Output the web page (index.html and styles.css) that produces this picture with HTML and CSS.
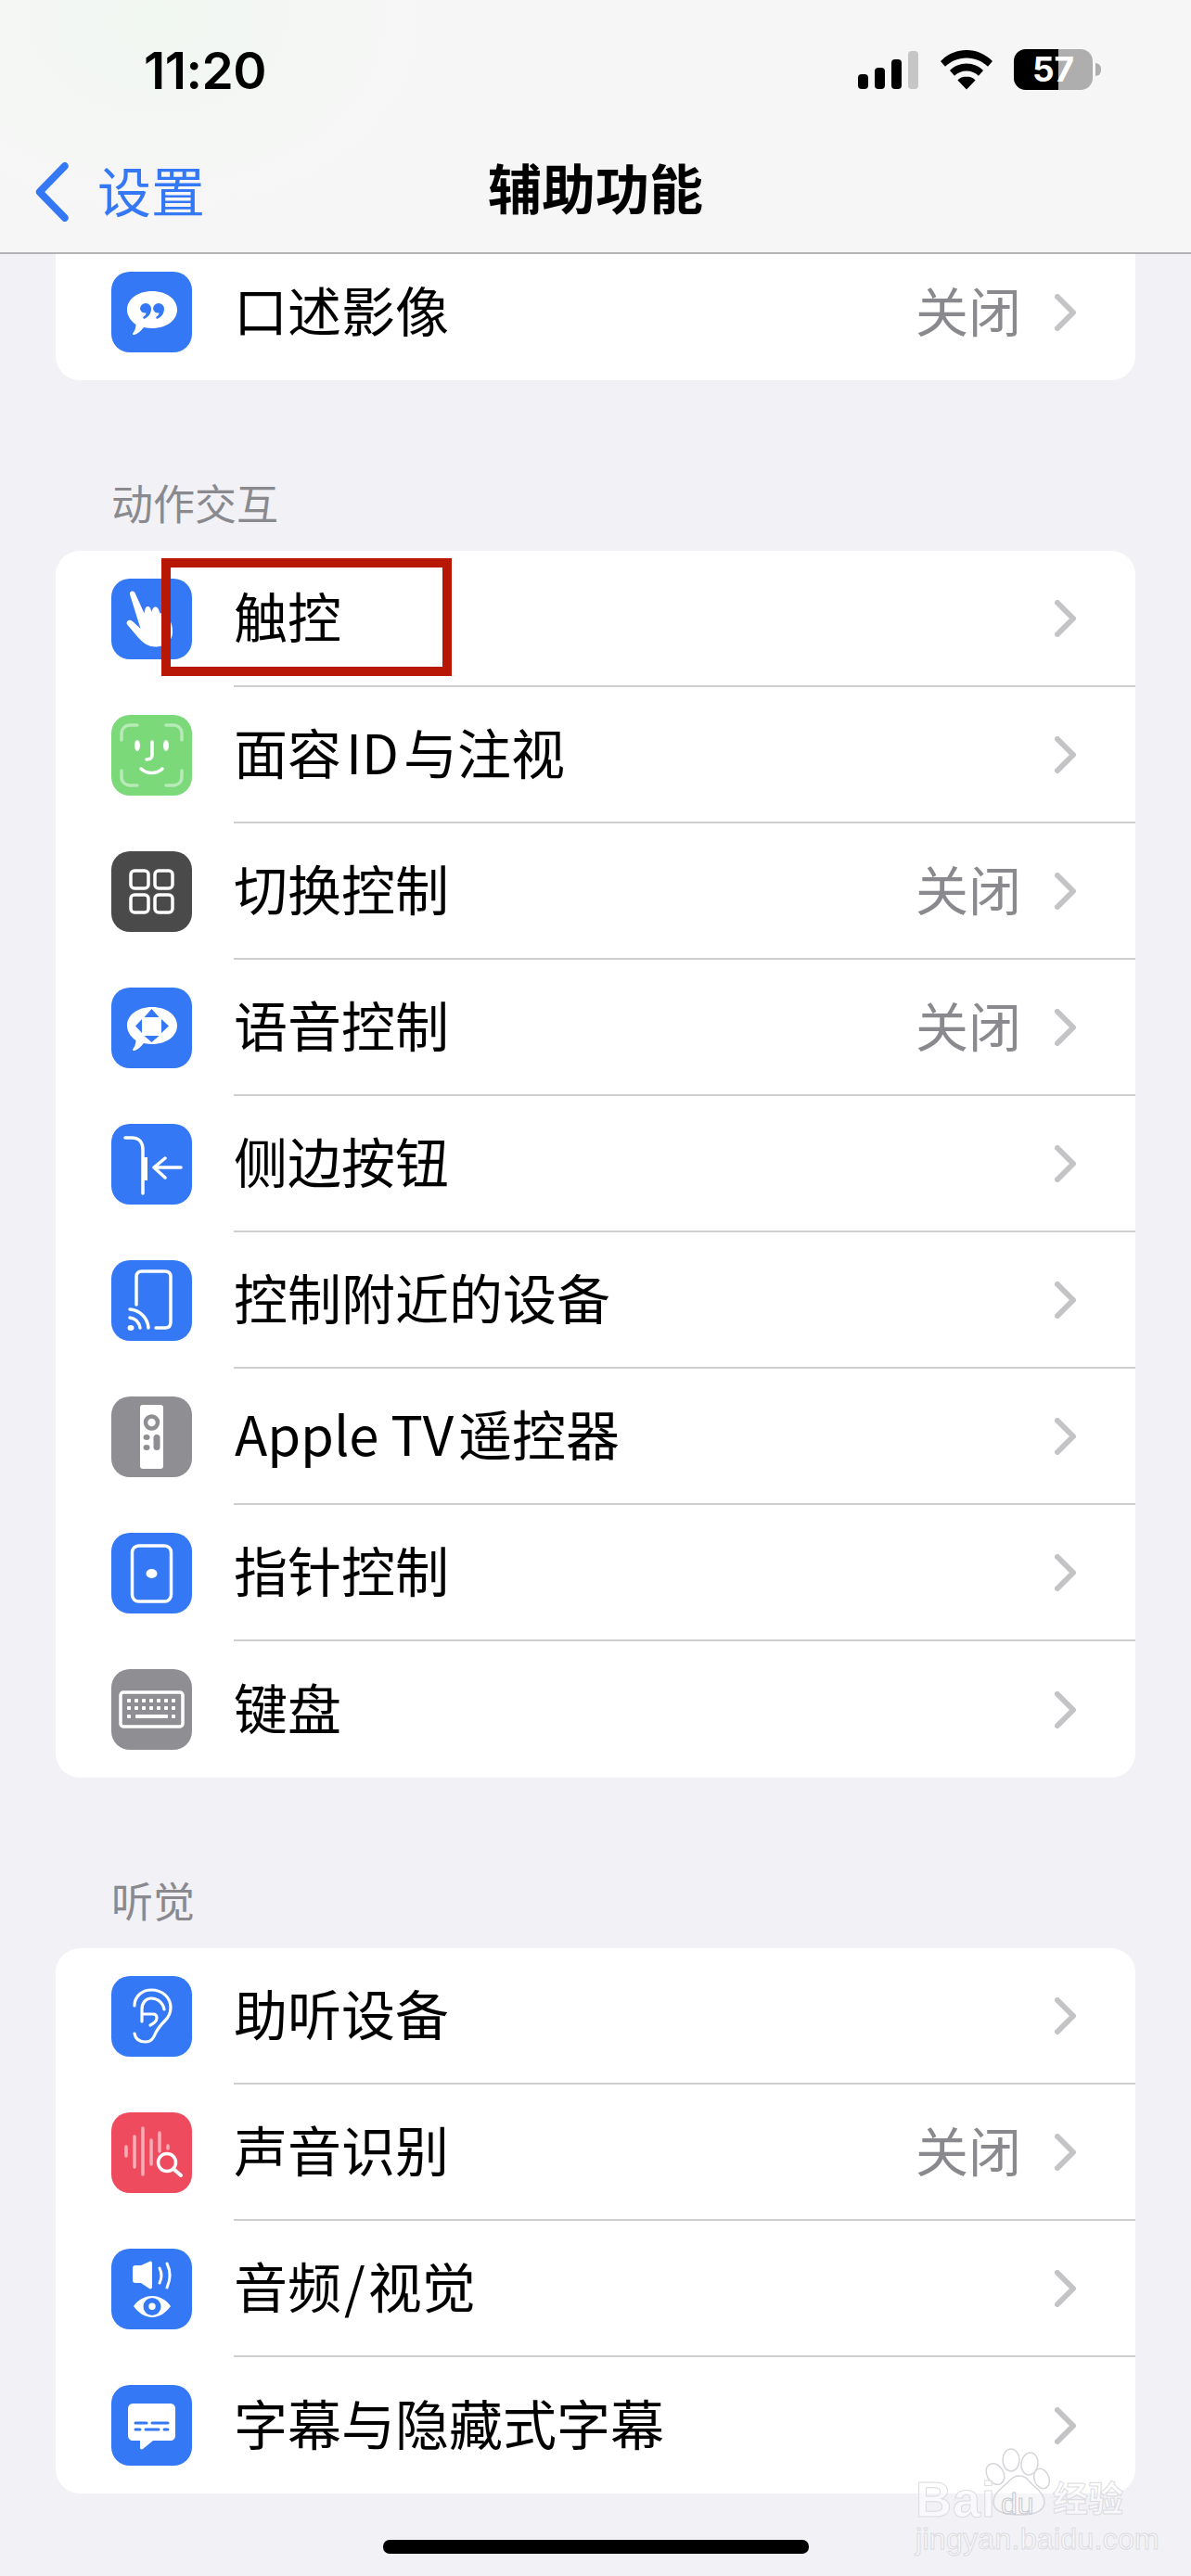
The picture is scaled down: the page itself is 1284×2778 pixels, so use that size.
FILE: index.html
```html
<!DOCTYPE html>
<html lang="zh-CN">
<head>
<meta charset="utf-8">
<title>辅助功能</title>
<link rel="stylesheet" href="styles.css">
</head>
<body>
<div class="page">
  <header class="top">
    <div class="status">
      <span class="time">11:20</span>
      <div class="status-icons">
        <svg class="sig" viewBox="0 0 65 42" width="65" height="42"><rect x="0" y="25" width="11" height="16" rx="4"/><rect x="18" y="18" width="11" height="23" rx="4"/><rect x="36" y="9" width="11" height="32" rx="4"/><rect x="54" y="0" width="11" height="41" rx="4" fill="#c6c6c6"/></svg>
        <svg class="wifi" viewBox="0 0 58 44" width="58" height="44"><path d="M29 1C18 1 8.500 5.500 1 13l5 5.800C12 13 20 9.500 29 9.500S46 13 52 18.800l5-5.800C49.500 5.500 40 1 29 1Z"/><path d="M29 15.500c-7 0-13.300 2.800-18 7.400l5 5.800c3.400-3.300 8-5.300 13-5.300s9.600 2 13 5.300l5-5.800c-4.700-4.600-11-7.400-18-7.400Z"/><path d="M29 29.500c-3.800 0-7.200 1.500-9.600 4L29 43.500l9.600-10c-2.400-2.500-5.800-4-9.600-4Z"/></svg>
        <div class="battery"><span class="batt-fill"></span><span class="batt-num">57</span><span class="batt-cap"></span></div>
      </div>
    </div>
    <nav class="nav">
      <div class="back">
        <svg viewBox="0 0 40 64" width="40" height="64"><path d="M35 4 6 32l29 28" transform="matrix(.94 0 0 1 1 0)"/></svg>
        <span class="back-txt">设置</span>
      </div>
      <h1 class="title">辅助功能</h1>
    </nav>
  </header>

  <main class="content">
    <section class="card card-cut">
      <div class="row first-row">
        <svg class="ico" viewBox="0 0 87 87"><rect class="blue" width="87" height="87" rx="20"/><path fill="#fff" d="M44 21C60 21 71 30 71 41S60 61 44 61c-3 0-6-.3-9-1-3 4-7 7-10 8-2 .5-2.500-1-1.500-2 1.500-2 3-5 3-9C21 53 17 47.500 17 41 17 30 28 21 44 21Z"/><path class="blue-f" d="M31 40a6 6 0 0 1 12 0c0 5-3 9-8 11l-1-2c2-1 3.500-3 3.500-4.500A6 6 0 0 1 31 40Z"/><path class="blue-f" d="M45 40a6 6 0 0 1 12 0c0 5-3 9-8 11l-1-2c2-1 3.500-3 3.500-4.500A6 6 0 0 1 45 40Z"/></svg>
        <div class="label no-sep"><span class="txt">口述影像</span><span class="val">关闭</span><svg class="chev" viewBox="0 0 23 40"><path d="M3 3l17 17L3 37"/></svg></div>
      </div>
    </section>

    <h2 class="sec">动作交互</h2>
    <section class="card">
      <div class="row">
        <svg class="ico" viewBox="0 0 87 87"><rect class="blue" width="87" height="87" rx="20"/><path fill="#fff" transform="translate(1 1)" d="M19 16c-.9-3 2.900-4.800 5-2.500.6.700 1 1.800 1.500 3l9 20c.5-3 1-7 3.500-7.500 2.500-.4 3.500 2.500 4.500 6 .6-3 2-6 4.500-5.500 2.500.5 3.500 3.500 4.500 7 1.500-.5 5-.8 8 3 4 5 6 12 5.500 18-.5 8-7 14.500-17 15-8 .4-14-3-20-10L16.500 49c-1.500-1.500-1.200-4 1-5 2-1 3.500.2 5 1.500l8 7.500L19 16Z"/></svg>
        <div class="label"><span class="txt">触控</span><svg class="chev" viewBox="0 0 23 40"><path d="M3 3l17 17L3 37"/></svg></div>
      </div>
      <div class="row">
        <svg class="ico" viewBox="0 0 87 87"><rect width="87" height="87" rx="20" fill="#7bd97a"/><g fill="none" stroke="#fff" stroke-width="3.500" stroke-linecap="round"><path opacity=".45" d="M11 27v-7c0-5 4-9 9-9h8M59 11h8c5 0 9 4 9 9v7M76 60v7c0 5-4 9-9 9h-8M28 76h-8c-5 0-9-4-9-9v-7"/><path d="M44 29v14c0 4-2 5-6 5M32 58c6 6 17 6 23 0"/></g><ellipse cx="28" cy="33" rx="3" ry="6" fill="#fff"/><ellipse cx="59" cy="33" rx="3" ry="6" fill="#fff"/></svg>
        <div class="label"><span class="txt">面容<span class="latin">ID</span>与注视</span><svg class="chev" viewBox="0 0 23 40"><path d="M3 3l17 17L3 37"/></svg></div>
      </div>
      <div class="row">
        <svg class="ico" viewBox="0 0 87 87"><rect width="87" height="87" rx="20" fill="#4a4a4a"/><g fill="none" stroke="#fff" stroke-width="3.500"><rect x="21" y="21" width="19" height="19" rx="4"/><rect x="47" y="21" width="19" height="19" rx="4"/><rect x="21" y="47" width="19" height="19" rx="4"/><rect x="47" y="47" width="19" height="19" rx="4"/></g></svg>
        <div class="label"><span class="txt">切换控制</span><span class="val">关闭</span><svg class="chev" viewBox="0 0 23 40"><path d="M3 3l17 17L3 37"/></svg></div>
      </div>
      <div class="row">
        <svg class="ico" viewBox="0 0 87 87"><rect class="blue" width="87" height="87" rx="20"/><path fill="#fff" d="M44 21C60 21 71 30 71 41S60 61 44 61c-3 0-6-.3-9-1-3 4-7 7-10 8-2 .5-2.500-1-1.500-2 1.500-2 3-5 3-9C21 53 17 47.500 17 41 17 30 28 21 44 21Z"/><path class="blue-f" d="M43.500 23l8 9h-16l8-9ZM43.500 59l8-7h-16l8 7ZM26 41.500l7-7.500v15l-7-7.500ZM62 41.500 54 34v15l8-7.500Z"/></svg>
        <div class="label"><span class="txt">语音控制</span><span class="val">关闭</span><svg class="chev" viewBox="0 0 23 40"><path d="M3 3l17 17L3 37"/></svg></div>
      </div>
      <div class="row">
        <svg class="ico" viewBox="0 0 87 87"><rect class="blue" width="87" height="87" rx="20"/><g fill="none" stroke="#fff" stroke-width="3.500" stroke-linecap="round" stroke-linejoin="round"><path d="M15 15h7c8 0 12 5 12 13v47"/><path d="M75 47H46M58 37 46 47l12 11"/></g><rect x="35" y="36" width="4" height="25" fill="#fff"/></svg>
        <div class="label"><span class="txt">侧边按钮</span><svg class="chev" viewBox="0 0 23 40"><path d="M3 3l17 17L3 37"/></svg></div>
      </div>
      <div class="row">
        <svg class="ico" viewBox="0 0 87 87"><rect class="blue" width="87" height="87" rx="20"/><g fill="none" stroke="#fff" stroke-linecap="round"><path stroke-width="3.500" d="M27 48V18c0-4 2-6 6-6h25c4 0 6 2 6 6v49c0 4-2 6-6 6H48"/><path stroke-width="3.500" d="M20 62c6 1 10 5 11 11M20 53c11 1 19 9 20 20"/></g><ellipse cx="21" cy="73" rx="3.500" ry="3" fill="#fff"/></svg>
        <div class="label"><span class="txt">控制附近的设备</span><svg class="chev" viewBox="0 0 23 40"><path d="M3 3l17 17L3 37"/></svg></div>
      </div>
      <div class="row">
        <svg class="ico" viewBox="0 0 87 87"><rect class="gray" width="87" height="87" rx="20"/><rect x="31" y="9" width="25" height="69" rx="3" fill="#fff"/><circle cx="43.500" cy="28" r="6.500" fill="none" stroke="#8e8e93" stroke-width="4.500"/><ellipse cx="38" cy="44" rx="3.500" ry="3" class="gray"/><ellipse cx="38" cy="55" rx="3.500" ry="3" class="gray"/><rect x="45.500" y="41" width="7" height="17" rx="3.500" class="gray"/></svg>
        <div class="label"><span class="txt txt-apple">Apple TV<span class="cjk-gap">遥控器</span></span><svg class="chev" viewBox="0 0 23 40"><path d="M3 3l17 17L3 37"/></svg></div>
      </div>
      <div class="row">
        <svg class="ico" viewBox="0 0 87 87"><rect class="blue" width="87" height="87" rx="20"/><rect x="22.500" y="14" width="42" height="60" rx="7" fill="none" stroke="#fff" stroke-width="3.500"/><ellipse cx="43.500" cy="44" rx="6" ry="5" fill="#fff"/></svg>
        <div class="label"><span class="txt">指针控制</span><svg class="chev" viewBox="0 0 23 40"><path d="M3 3l17 17L3 37"/></svg></div>
      </div>
      <div class="row">
        <svg class="ico" viewBox="0 0 87 87"><rect class="gray" width="87" height="87" rx="20"/><rect x="10" y="25" width="67" height="37" rx="3" fill="none" stroke="#fff" stroke-width="3.500"/><g fill="#fff"><rect x="17" y="32" width="4" height="4" rx="1"/><rect x="25" y="32" width="4" height="4" rx="1"/><rect x="33" y="32" width="4" height="4" rx="1"/><rect x="41" y="32" width="4" height="4" rx="1"/><rect x="49" y="32" width="4" height="4" rx="1"/><rect x="57" y="32" width="4" height="4" rx="1"/><rect x="65" y="32" width="4" height="4" rx="1"/><rect x="17" y="40" width="4" height="4" rx="1"/><rect x="25" y="40" width="4" height="4" rx="1"/><rect x="33" y="40" width="4" height="4" rx="1"/><rect x="41" y="40" width="4" height="4" rx="1"/><rect x="49" y="40" width="4" height="4" rx="1"/><rect x="57" y="40" width="4" height="4" rx="1"/><rect x="65" y="40" width="4" height="4" rx="1"/><rect x="17" y="49" width="4" height="4" rx="1"/><rect x="26" y="49" width="35" height="4" rx="1"/><rect x="65" y="49" width="4" height="4" rx="1"/></g></svg>
        <div class="label no-sep"><span class="txt">键盘</span><svg class="chev" viewBox="0 0 23 40"><path d="M3 3l17 17L3 37"/></svg></div>
      </div>
    </section>

    <h2 class="sec sec-2">听觉</h2>
    <section class="card">
      <div class="row">
        <svg class="ico" viewBox="0 0 87 87"><rect class="blue" width="87" height="87" rx="20"/><path fill="none" stroke="#fff" stroke-width="3.200" stroke-linecap="round" stroke-linejoin="round" d="M25 32c0-10 8-17 18-17 12 0 21 8 21 19 0 6-2 10-6 14-4 4-7 7-10 13-2.500 6-5 10-11 10-7 0-11-3-12-9M33 49V36c0-7 4-12 10-12 7 0 13 5 14 12M35 41h10c3 0 4 2 4 4 0 3-3 6-7 8"/></svg>
        <div class="label"><span class="txt">助听设备</span><svg class="chev" viewBox="0 0 23 40"><path d="M3 3l17 17L3 37"/></svg></div>
      </div>
      <div class="row">
        <svg class="ico" viewBox="0 0 87 87"><rect width="87" height="87" rx="20" fill="#ee4b5f"/><g stroke="#fff" stroke-opacity=".55" stroke-width="3.500" stroke-linecap="round"><path d="M16 37v10M25 26v33M34 17v50M43 30v26M52 22v20M61 36v3"/></g><circle cx="60" cy="54" r="9.500" fill="#ee4b5f" stroke="#fff" stroke-width="3.500"/><path d="m67 61 8 7" stroke="#fff" stroke-width="4" stroke-linecap="round"/></svg>
        <div class="label"><span class="txt">声音识别</span><span class="val">关闭</span><svg class="chev" viewBox="0 0 23 40"><path d="M3 3l17 17L3 37"/></svg></div>
      </div>
      <div class="row">
        <svg class="ico" viewBox="0 0 87 87"><rect class="blue" width="87" height="87" rx="20"/><path fill="#fff" d="M23 21c0-2 1-3 3-3h6l9-4c2-1 3 0 3 2v25c0 2-1.500 3-3 2l-9-6h-6c-2 0-3-1-3-3V21Z"/><path fill="none" stroke="#fff" stroke-width="3" stroke-linecap="round" d="M52 21c2.500 5 2.500 11 0 16M60 16c4 8 4 17 0 26"/><path fill="#fff" fill-rule="evenodd" d="M24 62c5-7 12-11 20-11s15 4 20 11c-5 7-12 12-20 12S29 69 24 62Zm20-9a9.500 9.500 0 1 0 0 19 9.500 9.500 0 0 0 0-19Zm0 5.500a3.700 3.700 0 1 1 0 7.400 3.700 3.700 0 0 1 0-7.400Z"/></svg>
        <div class="label"><span class="txt">音频<span class="slash">/</span>视觉</span><svg class="chev" viewBox="0 0 23 40"><path d="M3 3l17 17L3 37"/></svg></div>
      </div>
      <div class="row">
        <svg class="ico" viewBox="0 0 87 87"><rect class="blue" width="87" height="87" rx="20"/><path fill="#fff" d="M24 20h39c4 0 6 2 6 6v28c0 4-2 6-6 6H45L34 69c-1.500 1-3 .5-3-1.500V60h-7c-4 0-6-2-6-6V26c0-4 2-6 6-6Z"/><g class="blue-s" stroke-width="3" stroke-linecap="round"><path d="M26 41h12M44 41h17M26 48h5M37 48h14M57 48h4"/></g></svg>
        <div class="label no-sep"><span class="txt">字幕与隐藏式字幕</span><svg class="chev" viewBox="0 0 23 40"><path d="M3 3l17 17L3 37"/></svg></div>
      </div>
    </section>
  </main>

  <div class="mark"></div>

  <div class="watermark">
    <svg class="paw" viewBox="0 0 100 80" width="100" height="80"><g fill="#fff" fill-opacity=".4" stroke="#d6d6da" stroke-width="1.500"><ellipse cx="29" cy="28" rx="9" ry="12" transform="rotate(-30 29 28)"/><ellipse cx="46" cy="13" rx="9" ry="12"/><ellipse cx="66" cy="17" rx="9" ry="12" transform="rotate(8 66 17)"/><ellipse cx="79" cy="33" rx="8" ry="11" transform="rotate(-20 79 33)"/><path d="M55 30c8 0 10 6 16 11 6 5 11 10 11 17 0 9-9 14-27 14s-28-5-28-14c0-7 5-12 11-17 6-5 9-11 17-11Z"/></g></svg>
    <span class="wm-bai">Bai</span>
    <span class="wm-du">du</span>
    <span class="wm-cn">经验</span>
    <span class="wm-url">jingyan.baidu.com</span>
  </div>

  <div class="home-bar"></div>
</div>
</body>
</html>
```

FILE: styles.css
```css
* { box-sizing: border-box; }
html, body { margin: 0; padding: 0; }
body {
  background: #f1f1f6;
  font-family: "Noto Sans CJK SC", "Inter", sans-serif;
  color: #000;
}
.page {
  position: relative;
  width: 1284px;
  height: 2778px;
  overflow: hidden;
  background: #f1f1f6;
}
.top {
  height: 274px;
  border-bottom: 2px solid #b4b4b6;
  background:
    radial-gradient(ellipse 300px 220px at 170px 20px, #f1f7f1 0%, rgba(246,246,246,0) 100%),
    #f6f6f6;
}
.status {
  height: 152px;
  padding: 53px 106px 0 155px;
  display: flex;
  justify-content: space-between;
  align-items: flex-start;
}
.time {
  font-family: "Inter", sans-serif;
  font-weight: 600;
  font-size: 55px;
  line-height: 46px;
  letter-spacing: -.5px;
}
.status-icons {
  display: flex;
  align-items: flex-start;
  gap: 22px;
}
.sig { margin-top: 2px; display: block; fill: #000; margin-right: 1px; }
.wifi { display: block; fill: #000; }
.battery {
  position: relative;
  width: 85px;
  height: 44px;
  border-radius: 13px;
  background: #aeaeae;
}
.batt-fill {
  position: absolute;
  left: 0; top: 0; bottom: 0;
  width: 48px;
  background: #000;
  border-radius: 13px 0 0 13px;
}
.batt-num {
  position: absolute;
  left: 0; right: 0; top: 0;
  text-align: center;
  font-family: "Inter", sans-serif;
  font-weight: 700;
  font-size: 37px;
  line-height: 44px;
  color: #fff;
}
.batt-cap {
  position: absolute;
  left: 88px; top: 15px;
  width: 6px; height: 14px;
  background: #aeaeae;
  border-radius: 0 7px 7px 0;
}
.nav {
  position: relative;
  height: 106px;
  display: flex;
  align-items: flex-start;
  justify-content: center;
}
.back {
  position: absolute;
  left: 36px;
  top: 20px;
  display: flex;
  align-items: center;
  gap: 29px;
  color: #3478f6;
  font-size: 58px;
  line-height: 64px;
}
.back-txt { padding-bottom: 6px; }
.back svg { display: block; }
.back path { fill: none; stroke: #3478f6; stroke-width: 8; stroke-linecap: round; stroke-linejoin: round; }
.title {
  margin: 0;
  padding-top: 7px;
  font-size: 58px;
  line-height: 84px;
  font-weight: 700;
}
.content { padding: 0 60px; }
.card {
  background: #fff;
  border-radius: 26px;
  overflow: hidden;
}
.card-cut { border-radius: 0 0 26px 26px; }
.row {
  height: 147px;
  display: flex;
  align-items: center;
  padding-left: 60px;
  gap: 45px;
}
.first-row { height: 136px; padding-bottom: 11px; }
.ico { width: 87px; height: 87px; flex: none; display: block; }
.blue { fill: #3478f6; }
.blue-f { fill: #3478f6; }
.blue-s { stroke: #3478f6; }
.gray { fill: #8e8e93; }
.label {
  flex: 1;
  min-width: 0;
  height: 100%;
  display: flex;
  align-items: center;
  padding-right: 64px;
  border-bottom: 2px solid #cfcfd1;
  font-size: 58px;
  line-height: 80px;
  white-space: nowrap;
}
.no-sep { border-bottom: 0; }
.txt { padding-bottom: 8px; }
.txt-apple { letter-spacing: -.1px; padding-left: 1px; }
.latin { margin: 0 5px; }
.cjk-gap { margin-left: 5px; letter-spacing: 0; }
.slash { margin: 0 3px; }
.val {
  margin-left: auto;
  padding-bottom: 8px;
  font-size: 57px;
  color: #8a8a8e;
  line-height: 80px;
}
.chev {
  width: 23px;
  height: 40px;
  flex: none;
  margin-left: auto;
  fill: none;
  stroke: #c4c4c6;
  stroke-width: 6;
  stroke-linecap: round;
  stroke-linejoin: round;
  display: block;
}
.val + .chev { margin-left: 36px; }
.sec {
  margin: 0;
  height: 184px;
  padding: 102px 0 0 60px;
  font-size: 45px;
  line-height: 60px;
  font-weight: 400;
  color: #8a8a8e;
}
.mark {
  position: absolute;
  left: 174px;
  top: 602px;
  width: 313px;
  height: 127px;
  border: 10px solid #b91706;
}
.home-bar {
  position: absolute;
  left: 413px;
  bottom: 24px;
  width: 459px;
  height: 15px;
  border-radius: 7px;
  background: #000;
}
.watermark {
  position: absolute;
  left: 984px;
  top: 2640px;
  width: 240px;
  height: 115px;
  font-family: "Liberation Sans", sans-serif;
  color: rgba(255,255,255,.55);
  white-space: nowrap;
}
.paw { position: absolute; left: 60px; top: 0; display: block; }
.wm-bai, .wm-du, .wm-cn, .wm-url { position: absolute; -webkit-text-stroke: 1px #dcdce0; }
.wm-bai { left: 3px; top: 27px; font-size: 54px; line-height: 56px; font-weight: 700; letter-spacing: 1px; }
.wm-du { left: 95px; top: 42px; font-size: 32px; line-height: 36px; color: rgba(255,255,255,.3); -webkit-text-stroke: 1px #c8c8cc; }
.wm-cn { left: 151px; top: 24px; font-family: "Noto Sans CJK SC", sans-serif; font-size: 38px; line-height: 56px; font-weight: 700; }
.wm-url { left: 3px; top: 82px; font-size: 32px; line-height: 32px; letter-spacing: .3px; }
```
